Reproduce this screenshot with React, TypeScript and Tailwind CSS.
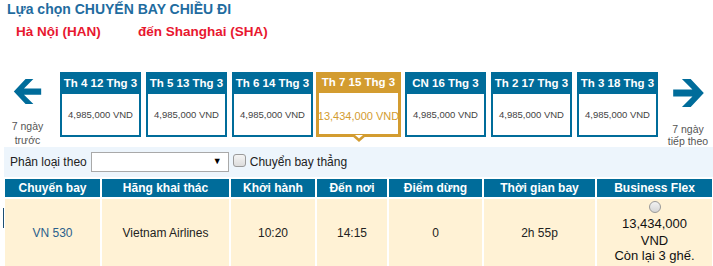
import React from 'react';

interface DayTab {
    label: string;
    price: string;
    selected?: boolean;
}

const days: DayTab[] = [
    { label: 'Th 4 12 Thg 3', price: '4,985,000 VND' },
    { label: 'Th 5 13 Thg 3', price: '4,985,000 VND' },
    { label: 'Th 6 14 Thg 3', price: '4,985,000 VND' },
    { label: 'Th 7 15 Thg 3', price: '13,434,000 VND', selected: true },
    { label: 'CN 16 Thg 3', price: '4,985,000 VND' },
    { label: 'Th 2 17 Thg 3', price: '4,985,000 VND' },
    { label: 'Th 3 18 Thg 3', price: '4,985,000 VND' },
];

const columns = [
    { title: 'Chuyến bay', width: 'w-[95px]' },
    { title: 'Hãng khai thác', width: 'w-[127px]' },
    { title: 'Khởi hành', width: 'w-[84px]' },
    { title: 'Đến nơi', width: 'w-[70px]' },
    { title: 'Điểm dừng', width: 'w-[93px]' },
    { title: 'Thời gian bay', width: 'w-[111px]' },
    { title: 'Business Flex', width: 'w-[115px]' },
];

const Arrow = ({ flip = false }: { flip?: boolean }) => (
    <svg width="35" height="32" viewBox="0 0 35 32" className={flip ? 'scale-x-[-1]' : ''}>
        <polygon points="0,16 15,0 25,0 13,12 35,12 35,20 13,20 25,32 15,32" fill="#006c9a" />
    </svg>
);

const Tab = ({ day }: { day: DayTab }) => {
    if (day.selected) {
        return (
            <div className="relative w-[85px] h-[65px] -ml-[2px] -mr-[1px] border-[3px] border-[#d39c30] flex flex-col bg-white">
                <div className="h-[18px] bg-[#d39c30] text-white font-bold text-[11.5px] flex items-center justify-center pb-[2px] whitespace-nowrap">
                    {day.label}
                </div>
                <div className="flex-1 flex items-center justify-center pt-[5px] text-[11px] text-[#d39c30] whitespace-nowrap">
                    {day.price}
                </div>
                {/* notch under the selected day */}
                <svg width="16" height="8" viewBox="0 0 16 8" className="absolute left-1/2 -translate-x-1/2 -bottom-[9px]">
                    <polygon points="0,0 16,0 8,7" fill="#d39c30" />
                    <polygon points="4,0 12,0 8,3.5" fill="#ffffff" />
                </svg>
            </div>
        );
    }
    return (
        <div className="w-[81px] h-[65px] border-2 border-[#006c9a] flex flex-col bg-white">
            <div className="h-[22px] -mt-[2px] bg-[#006c9a] text-white font-bold text-[11.5px] flex items-center justify-center pt-[2px] whitespace-nowrap">
                {day.label}
            </div>
            <div className="flex-1 flex items-center justify-center text-[9.5px] text-[#444] pt-[1px] whitespace-nowrap">
                {day.price}
            </div>
        </div>
    );
};

export default function App() {
    return (
        <div className="w-[713px] h-[266px] overflow-hidden bg-white font-['Liberation_Sans',Arial,sans-serif]">
            <div className="pl-[7px] pt-[1px] text-[14px] font-bold text-[#1f6c9f] leading-[17px]">
                Lựa chọn CHUYẾN BAY CHIỀU ĐI
            </div>
            <div className="flex pl-[16px] pt-[5px] text-[13.5px] font-bold text-[#e8172f] leading-[17px]">
                <span className="w-[122px]">Hà Nội (HAN)</span>
                <span>đến Shanghai (SHA)</span>
            </div>

            <div className="flex h-[75px] mt-[32px] gap-[5px]">
                <div className="w-[55px] flex flex-col items-center pt-[7px]">
                    <Arrow />
                    <div className="mt-[15px] text-[10.5px] leading-[14px] text-[#555] text-center">
                        7 ngày<br />trước
                    </div>
                </div>
                {days.map((d) => (
                    <Tab key={d.label} day={d} />
                ))}
                <div className="w-[50px] flex flex-col items-center pt-[7px]">
                    <Arrow flip />
                    <div className="mt-[16px] text-[10.5px] leading-[12px] text-[#555] text-center whitespace-nowrap">
                        7 ngày<br />tiếp theo
                    </div>
                </div>
            </div>

            <div className="ml-[4px] h-[30px] bg-[#edf5fc] flex items-center pl-[6px] text-[12px] text-[#222]">
                <span>Phân loại theo</span>
                <div className="ml-[4px] w-[138px] h-[20px] border border-[#a9a9a9] bg-white flex items-center justify-end pr-[6px]">
                    <span className="text-[9px] text-black">▼</span>
                </div>
                <div className="ml-[4px] w-[13px] h-[13px] rounded-[3px] border border-[#9a9a9a] bg-gradient-to-b from-[#f4f4f4] to-[#dcdcdc] -mt-[4px]" />
                <span className="ml-[4px]">Chuyển bay thẳng</span>
            </div>

            <div className="relative mt-[2px] pl-[5px] flex flex-col gap-[2px]">
                <div className="flex gap-[2px]">
                    {columns.map((c) => (
                        <div
                            key={c.title}
                            className={`${c.width} h-[18px] bg-[#006c9a] text-white font-bold text-[12px] flex items-center justify-center`}
                        >
                            {c.title}
                        </div>
                    ))}
                </div>
                <div className="flex gap-[2px] h-[67px] text-[12px] text-[#222]">
                    <div className="w-[95px] bg-[#fff2d5] flex items-center justify-center text-[#2b5f8c]">VN 530</div>
                    <div className="w-[127px] bg-[#fff2d5] flex items-center justify-center">Vietnam Airlines</div>
                    <div className="w-[84px] bg-[#fff2d5] flex items-center justify-center">10:20</div>
                    <div className="w-[70px] bg-[#fff2d5] flex items-center justify-center">14:15</div>
                    <div className="w-[93px] bg-[#fff2d5] flex items-center justify-center">0</div>
                    <div className="w-[111px] bg-[#fff2d5] flex items-center justify-center">2h 55p</div>
                    <div className="w-[115px] bg-[#fff2d5] flex flex-col items-center pt-[2px] text-[13px] text-[#111]">
                        <div className="w-[12px] h-[12px] rounded-full border border-[#9a9a9a] bg-gradient-to-b from-[#f2f2f2] to-[#d6d6d6]" />
                        <div className="leading-[17px] mt-[2px]">13,434,000</div>
                        <div className="leading-[15px] mt-[1px]">VND</div>
                        <div className="leading-[15px]">Còn lại 3 ghế.</div>
                    </div>
                </div>
                <div className="absolute left-[3px] top-[29px] w-[1px] h-[20px] bg-[#1d4f73]" />
            </div>
        </div>
    );
}
